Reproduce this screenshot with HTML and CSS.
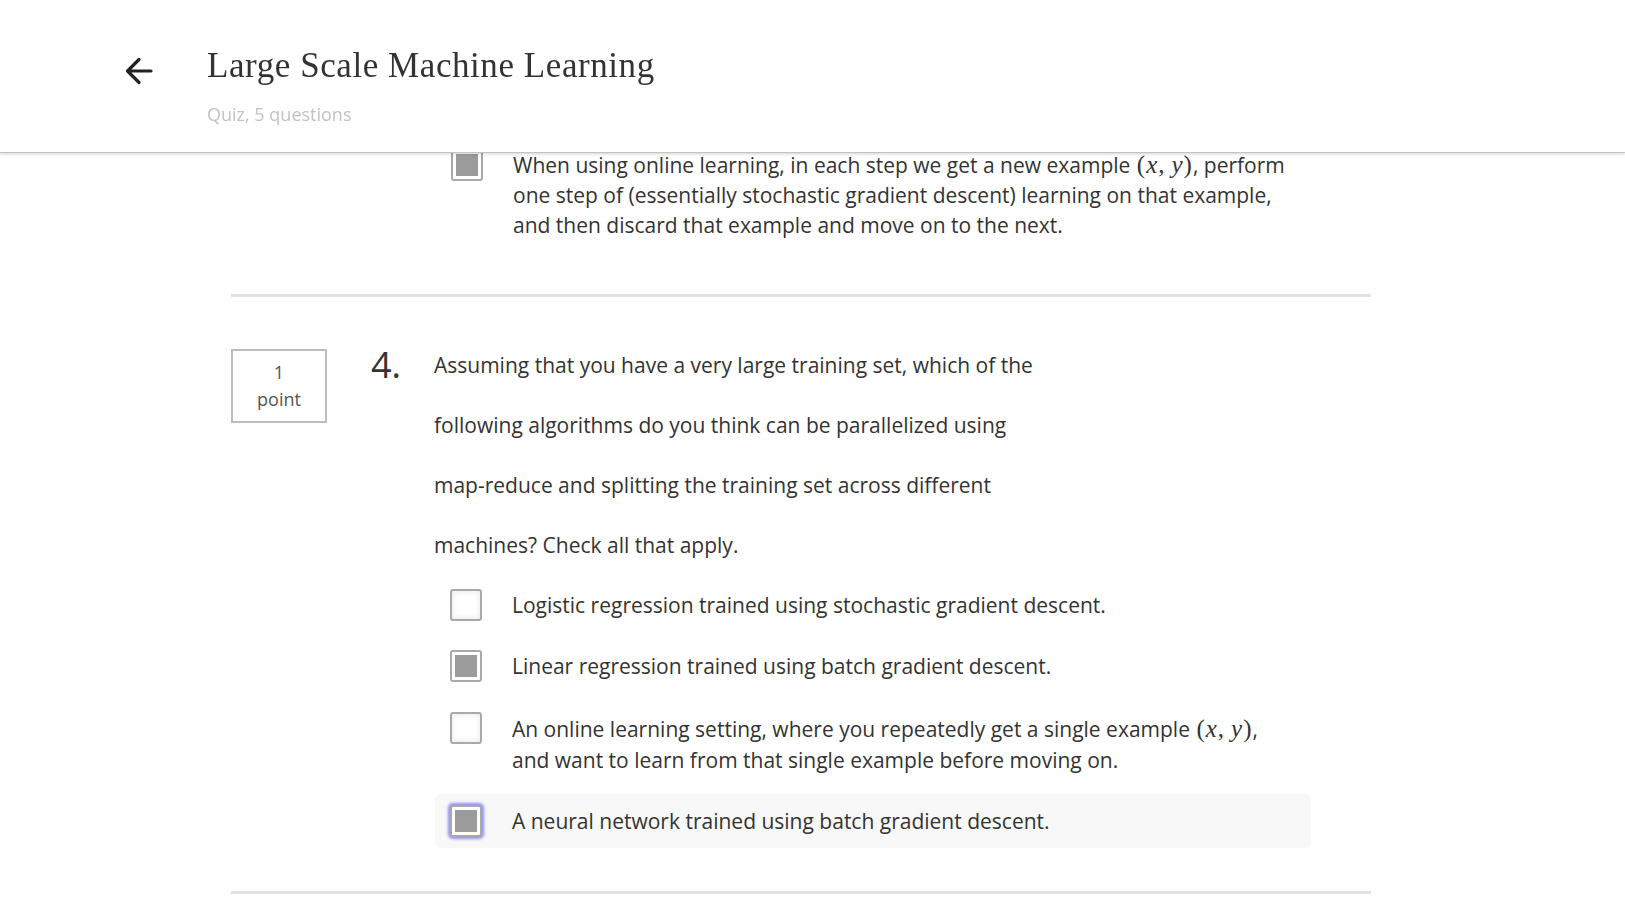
FILE: index.html
```html
<!DOCTYPE html>
<html>
<head>
<meta charset="utf-8">
<title>Large Scale Machine Learning</title>
<link rel="stylesheet" href="styles.css">
</head>
<body>
<header class="header">
  <div class="header-inner">
    <svg class="back" width="28" height="28" viewBox="0 0 28 28" aria-hidden="true">
      <path d="M26 14H3M14 2.5L2.5 14L14 25.5" fill="none" stroke="#222" stroke-width="3.2" stroke-linecap="round" stroke-linejoin="round"/>
    </svg>
    <div class="titles">
      <h1 class="title">Large Scale Machine Learning</h1>
      <div class="subtitle">Quiz, 5 questions</div>
    </div>
  </div>
</header>

<main class="main">
  <section class="question first">
    <div class="options">
      <div class="option">
        <span class="checkbox checked"></span>
        <div class="option-text">When using online learning, in each step we get a new example <span class="math">(<i>x</i>,<span class="msp"></span><i>y</i>)</span>, perform<br>one step of (essentially stochastic gradient descent) learning on that example,<br>and then discard that example and move on to the next.</div>
      </div>
    </div>
  </section>

  <section class="question">
    <div class="q-row">
      <div class="points">1<br>point</div>
      <div class="q-num">4.</div>
      <div class="q-body">
        <div class="q-text">
          <div class="q-line">Assuming that you have a very large training set, which of the</div>
          <div class="q-line">following algorithms do you think can be parallelized using</div>
          <div class="q-line">map-reduce and splitting the training set across different</div>
          <div class="q-line">machines? Check all that apply.</div>
        </div>
        <div class="options">
          <div class="option">
            <span class="checkbox"></span>
            <div class="option-text">Logistic regression trained using stochastic gradient descent.</div>
          </div>
          <div class="option">
            <span class="checkbox checked"></span>
            <div class="option-text">Linear regression trained using batch gradient descent.</div>
          </div>
          <div class="option tall">
            <span class="checkbox"></span>
            <div class="option-text">An online learning setting, where you repeatedly get a single example <span class="math">(<i>x</i>,<span class="msp"></span><i>y</i>)</span>,<br>and want to learn from that single example before moving on.</div>
          </div>
          <div class="option active">
            <span class="checkbox checked focused"></span>
            <div class="option-text">A neural network trained using batch gradient descent.</div>
          </div>
        </div>
      </div>
    </div>
  </section>
</main>
</body>
</html>
```

FILE: styles.css
```css
html, body {
  margin: 0;
  padding: 0;
  background: #ffffff;
}

body {
  font-family: "Open Sans", "Noto Sans", sans-serif;
  color: #333333;
}

.header {
  position: fixed;
  top: 0;
  left: 0;
  right: 0;
  height: 152px;
  background: #ffffff;
  border-bottom: 1px solid #c4c4c4;
  box-shadow: 0 1px 3px rgba(0, 0, 0, 0.18);
  z-index: 10;
}

.header-inner {
  display: flex;
  align-items: flex-start;
  padding-left: 125px;
  padding-top: 46px;
}

.back {
  margin-top: 11px;
  flex: none;
}

.titles {
  margin-left: 54px;
}

.title {
  margin: 0;
  font-family: "Liberation Serif", "DejaVu Serif", serif;
  font-weight: normal;
  font-size: 35px;
  line-height: 40px;
  color: #333333;
  letter-spacing: 0.57px;
}

.subtitle {
  margin-top: 16px;
  font-size: 18px;
  line-height: 24px;
  color: #c2c2c2;
}

.main {
  padding-top: 138px;
  width: 1140px;
  margin-left: 231px;
}

.question {
  padding-top: 38px;
  padding-bottom: 43px;
  border-bottom: 3px solid #e3e3e3;
}

.question.first {
  padding-top: 0;
}

.question.first .options {
  margin-left: 204px;
  margin-top: 0;
}

.q-row {
  display: flex;
  align-items: flex-start;
}

.points {
  flex: none;
  box-sizing: border-box;
  width: 96px;
  height: 74px;
  margin-top: 14px;
  padding-top: 8px;
  border: 2px solid #bdbdbd;
  text-align: center;
  font-size: 18px;
  line-height: 27px;
  color: #555555;
}

.q-num {
  flex: none;
  width: 63px;
  margin-left: 44px;
  font-size: 36px;
  line-height: 60px;
  color: #333333;
}

.q-body {
  flex: 1;
}

.q-text {
  font-size: 21px;
  line-height: 60px;
}

.q-line {
  white-space: nowrap;
}

.options {
  margin-top: 3px;
  display: flex;
  flex-direction: column;
  gap: 7px;
}

.option {
  box-sizing: border-box;
  width: 876px;
  margin-left: 1px;
  display: flex;
  align-items: flex-start;
  padding: 11px 15px;
  border-radius: 6px;
}

.option.tall {
  padding-top: 12px;
  padding-bottom: 11px;
}

.option.tall .option-text {
  line-height: 31px;
}

.option.active {
  background: #f8f8f8;
}

.checkbox {
  flex: none;
  box-sizing: border-box;
  width: 32px;
  height: 32px;
  border: 2px solid #a9a9a9;
  border-radius: 3px;
  background: #ffffff;
  box-shadow: inset 0 0 4px 2px #f0f0f0;
  position: relative;
}

.checkbox.checked {
  box-shadow: none;
}

.checkbox.checked::after {
  content: "";
  position: absolute;
  left: 3px;
  top: 3px;
  right: 3px;
  bottom: 3px;
  background: #9b9b9b;
}

.checkbox.focused {
  box-shadow: 0 0 3px 2px #8f8ff5;
}

.option-text {
  margin-left: 30px;
  margin-top: 1px;
  font-size: 21px;
  line-height: 30px;
  color: #333333;
  white-space: nowrap;
}

.math {
  font-family: "Liberation Serif", "DejaVu Serif", serif;
  font-size: 25px;
  padding: 0 1px;
}

.math i {
  font-style: italic;
  padding: 0 1px;
}

.msp {
  display: inline-block;
  width: 6px;
}
```
